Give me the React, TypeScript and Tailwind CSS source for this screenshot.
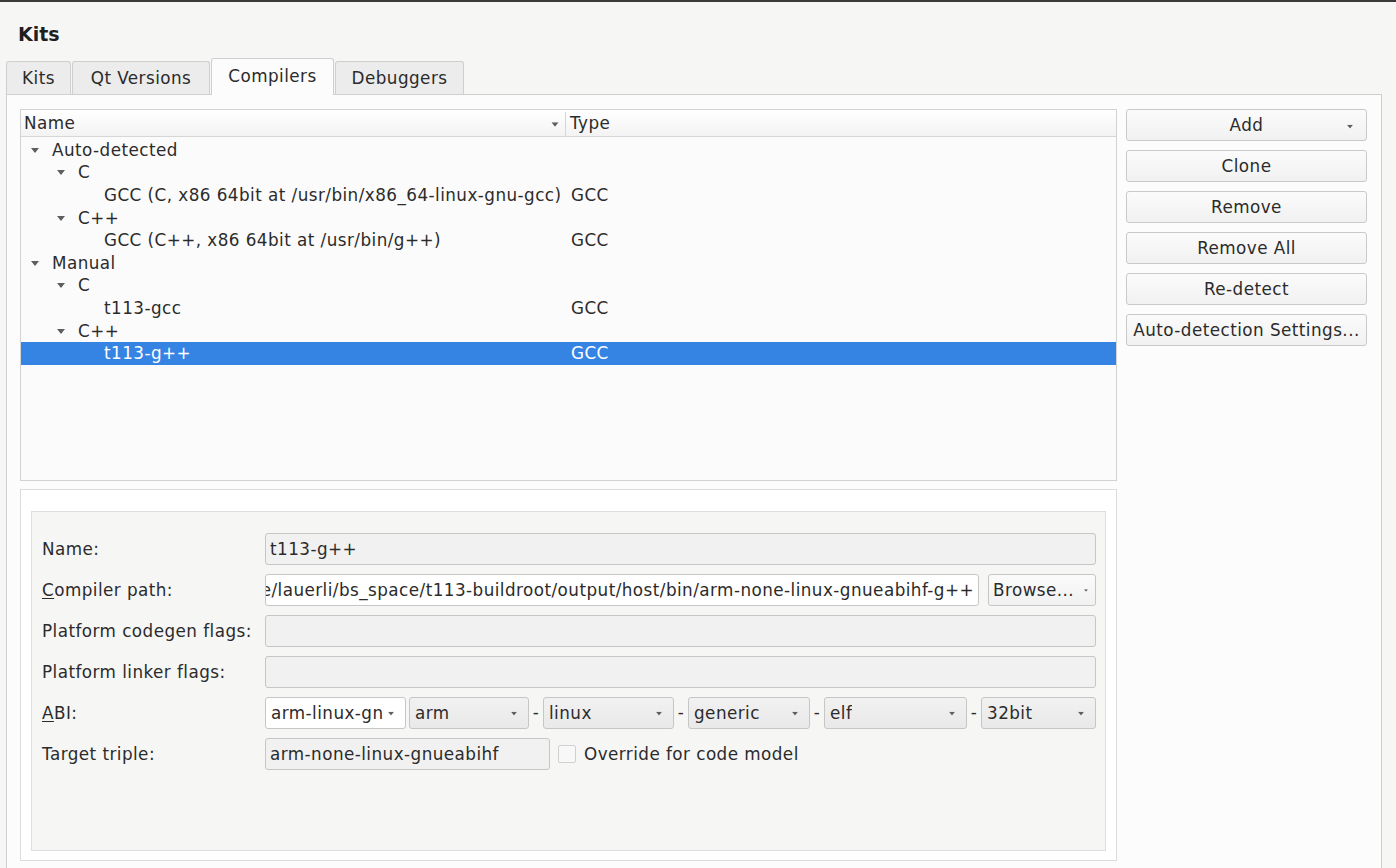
import React from "react";

const font = "font-['DejaVu_Sans','Noto_Sans',sans-serif] tracking-[0.45px]";
const txt = "text-[16.8px]";

function Arrow({ className = "" }: { className?: string }) {
  return (
    <svg width="8" height="5" viewBox="0 0 8 5" className={className}>
      <path d="M0 0 L8 0 L4 5 Z" fill="#5e5e5e" />
    </svg>
  );
}

interface Row {
  level: number;
  label: string;
  type?: string;
  expander?: boolean;
  selected?: boolean;
}

const ROWS: Row[] = [
  { level: 0, label: "Auto-detected", expander: true },
  { level: 1, label: "C", expander: true },
  { level: 2, label: "GCC (C, x86 64bit at /usr/bin/x86_64-linux-gnu-gcc)", type: "GCC" },
  { level: 1, label: "C++", expander: true },
  { level: 2, label: "GCC (C++, x86 64bit at /usr/bin/g++)", type: "GCC" },
  { level: 0, label: "Manual", expander: true },
  { level: 1, label: "C", expander: true },
  { level: 2, label: "t113-gcc", type: "GCC" },
  { level: 1, label: "C++", expander: true },
  { level: 2, label: "t113-g++", type: "GCC", selected: true },
];

const INDENT = ["pl-[10px]", "pl-[36px]", "pl-[62px]"];

function TreeRow({ r }: { r: Row }) {
  return (
    <div
      className={`flex items-center h-[22.6px] ${txt} leading-none ${
        r.selected ? "bg-[#3584e4] text-white" : "text-[#2b2b2b]"
      }`}
    >
      <div className={`w-[545px] flex items-center whitespace-nowrap ${INDENT[r.level]}`}>
        <span className="w-[21px] shrink-0 flex justify-start">{r.expander && <Arrow />}</span>
        <span>{r.label}</span>
      </div>
      <div className="pl-[5px]">{r.type}</div>
    </div>
  );
}

function SideButton({ label, dropdown }: { label: string; dropdown?: boolean }) {
  return (
    <button className={`relative h-[32px] w-full pt-[2px] rounded-[3px] border border-[#c9c9c9] bg-gradient-to-b from-[#fbfbfb] to-[#f1f1f1] ${txt} text-[#2b2b2b] whitespace-nowrap`}>
      {label}
      {dropdown && <Arrow className="absolute right-[12px] top-[14px] scale-75" />}
    </button>
  );
}

function Field({
  value = "",
  className = "",
  white,
  alignEnd,
}: {
  value?: string;
  className?: string;
  white?: boolean;
  alignEnd?: boolean;
}) {
  return (
    <div
      className={`h-[32px] min-w-0 flex items-center px-[4px] pt-[1px] rounded-[3px] border border-[#c6c6c6] ${txt} text-[#2b2b2b] overflow-hidden whitespace-nowrap ${
        white ? "bg-white" : "bg-[#f1f1f1]"
      } ${alignEnd ? "justify-end" : ""} ${className}`}
    >
      <span className="shrink-0">{value}</span>
    </div>
  );
}

function Combo({ value, className = "", white }: { value: string; className?: string; white?: boolean }) {
  return (
    <div
      className={`h-[32px] flex items-center justify-between pl-[5px] pr-[10px] pt-[1px] rounded-[3px] border border-[#c6c6c6] ${txt} text-[#2b2b2b] overflow-hidden whitespace-nowrap ${
        white ? "bg-white" : "bg-gradient-to-b from-[#f1f1f1] to-[#e9e9e9]"
      } ${className}`}
    >
      <span className="overflow-hidden min-w-0 text-clip">{value}</span>
      <Arrow className="shrink-0 ml-[4px] scale-75" />
    </div>
  );
}

function Dash() {
  return <span className={`${txt} text-[#2b2b2b] w-[14px] shrink-0 text-center`}>-</span>;
}

function Label({ children }: { children: React.ReactNode }) {
  return <div className={`h-[32px] pt-[1px] flex items-center ${txt} text-[#2b2b2b] whitespace-nowrap`}>{children}</div>;
}

function Tab({ label, w, active }: { label: string; w: string; active?: boolean }) {
  return (
    <div
      className={`${w} flex items-center justify-center border border-b-0 border-[#cfcfcf] rounded-t-[3px] ${
        active ? "h-[37px] bg-[#fcfcfc] relative top-[1px] pb-[1px]" : "h-[33px] pt-[1px] bg-[#ececec]"
      }`}
    >
      {label}
    </div>
  );
}

export default function App() {
  return (
    <div className={`w-[1396px] h-[868px] overflow-hidden bg-[#f6f6f5] border-t-2 border-[#3a3a3a] ${font}`}>
      <div className="pl-[18px] pt-[20px] text-[19px] font-bold leading-[24px] text-[#1f1f1f] tracking-normal">Kits</div>

      <div className={`flex items-end gap-[1px] ml-[6px] mt-[11px] h-[37px] ${txt} text-[#2b2b2b]`}>
        <Tab label="Kits" w="w-[65px]" />
        <Tab label="Qt Versions" w="w-[138px]" />
        <Tab label="Compilers" w="w-[123px]" active />
        <Tab label="Debuggers" w="w-[129px]" />
      </div>

      <div className="ml-[6px] w-[1376px] h-[800px] border border-[#cfcfcf] bg-[#fcfcfc] pl-[13px] pt-[14px] flex gap-[9px]">
        <div className="w-[1097px] flex flex-col gap-[8px]">
          {/* tree view */}
          <div className="h-[372px] border border-[#d2d2d2] bg-[#fbfbfb]">
            <div className={`flex h-[27px] items-center pt-[2px] bg-gradient-to-b from-[#ffffff] to-[#f3f3f3] border-b border-[#d6d6d6] ${txt} text-[#2b2b2b]`}>
              <div className="w-[545px] h-full flex items-center justify-between pl-[3px] pr-[6px] border-r border-[#d6d6d6]">
                <span>Name</span>
                <Arrow className="scale-90" />
              </div>
              <div className="pl-[4px]">Type</div>
            </div>
            <div className="pt-[2px]">
              {ROWS.map((r, i) => (
                <TreeRow key={i} r={r} />
              ))}
            </div>
          </div>

          {/* details */}
          <div className="h-[372px] border border-[#dcdcdc] bg-white pt-[21px] px-[10px] pb-[10px]">
            <div className="h-[340px] border border-[#dedede] bg-[#f6f6f5] pl-[10px] pr-[9px] pt-[21px]">
              <div className="grid grid-cols-[223px_minmax(0,1fr)] gap-y-[9px]">
                <Label>Name:</Label>
                <Field value="t113-g++" />

                <Label>
                  <span>
                    <span className="underline underline-offset-2">C</span>ompiler path:
                  </span>
                </Label>
                <div className="flex gap-[9px] min-w-0">
                  <Field
                    white
                    alignEnd
                    className="flex-1"
                    value="/home/lauerli/bs_space/t113-buildroot/output/host/bin/arm-none-linux-gnueabihf-g++"
                  />
                  <div className={`w-[108px] shrink-0 h-[32px] pt-[1px] flex items-center justify-between pl-[4px] pr-[5px] rounded-[3px] border border-[#c6c6c6] bg-gradient-to-b from-[#fbfbfb] to-[#f1f1f1] ${txt} text-[#2b2b2b] whitespace-nowrap overflow-hidden`}>
                    Browse...
                    <Arrow className="shrink-0 scale-50" />
                  </div>
                </div>

                <Label>Platform codegen flags:</Label>
                <Field />

                <Label>Platform linker flags:</Label>
                <Field />

                <Label>
                  <span>
                    <span className="underline underline-offset-2">A</span>BI:
                  </span>
                </Label>
                <div className="flex items-center">
                  <Combo white value="arm-linux-gnueabihf" className="w-[141px] shrink-0" />
                  <Combo value="arm" className="w-[120px] shrink-0 ml-[3px]" />
                  <Dash />
                  <Combo value="linux" className="w-[131px] shrink-0" />
                  <Dash />
                  <Combo value="generic" className="w-[122px] shrink-0" />
                  <Dash />
                  <Combo value="elf" className="w-[143px] shrink-0" />
                  <Dash />
                  <Combo value="32bit" className="flex-1 min-w-0" />
                </div>

                <Label>Target triple:</Label>
                <div className="flex items-center">
                  <Field value="arm-none-linux-gnueabihf" className="w-[285px]" />
                  <span className="ml-[8px] w-[18px] h-[18px] border border-[#d0d0d0] bg-[#f8f8f8] rounded-[2px]" />
                  <span className={`ml-[8px] pt-[1px] ${txt} text-[#2b2b2b]`}>Override for code model</span>
                </div>
              </div>
            </div>
          </div>
        </div>

        <div className="w-[241px] flex flex-col gap-[9px]">
          <SideButton label="Add" dropdown />
          <SideButton label="Clone" />
          <SideButton label="Remove" />
          <SideButton label="Remove All" />
          <SideButton label="Re-detect" />
          <SideButton label="Auto-detection Settings..." />
        </div>
      </div>
    </div>
  );
}
